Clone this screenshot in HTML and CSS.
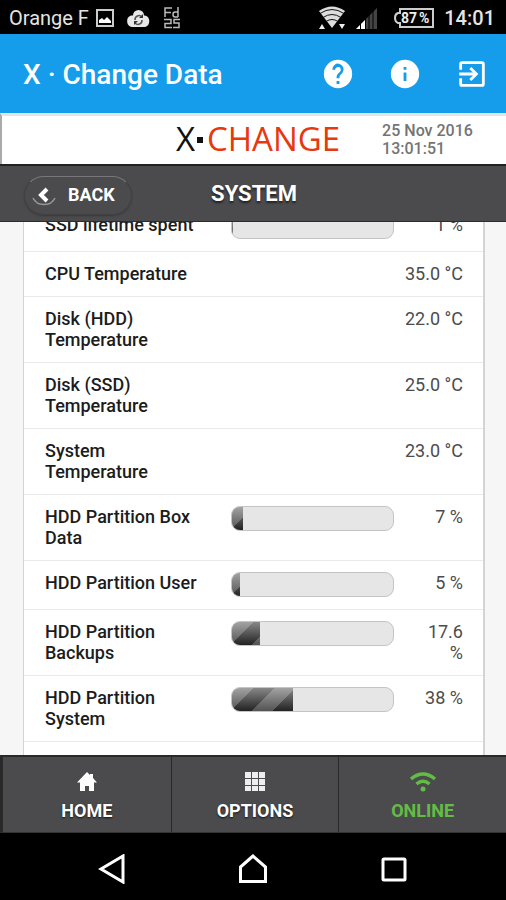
FILE: index.html
```html
<!DOCTYPE html>
<html lang="en">
<head>
<meta charset="utf-8">
<meta name="viewport" content="width=device-width, initial-scale=1">
<title>X · Change Data</title>
<link rel="stylesheet" href="styles.css">
</head>
<body>
<div class="status">
  <span class="carrier">Orange F</span>
  <svg class="picture" width="18" height="18" viewBox="0 0 18 18"><rect x="1" y="1" width="16" height="16" fill="none" stroke="#ccc" stroke-width="2"/><path d="M3 14v-3l3-2 2 2 3-3 4 4v2z" fill="#fff"/></svg>
  <svg class="cloud" width="25" height="20" viewBox="0 0 25 20"><path d="M6 19a6 6 0 0 1-1-11.500h2a5.500 5.500 0 0 1 11 0h1a6 6 0 0 1 0 11.500z" fill="#e8e8e8"/><path d="M9 12a4 4 0 0 1 7-3M16 12a4 4 0 0 1-7 3" fill="none" stroke="#555" stroke-width="1.500"/><path d="M17 6v4h-4zM8 17v-4h4z" fill="#333"/></svg>
  <svg class="app" width="18" height="22" viewBox="0 0 18 22"><path d="M9 1H2v9M2 5.500h6M15 0v10M15 5h-3q-2 0-2 2.500t2 2.500h3M1 12.500h7v4H2v4h7M17 12.500h-6v3.500h5v4.500h-6" fill="none" stroke="#bbb" stroke-width="1.500"/></svg>
  <svg class="wifi" width="28" height="24" viewBox="0 0 28 24"><path d="M1 5Q14-4 27 5L14 22z" fill="#ddd"/><path d="M2 7.500q12-8 24 0M5 11.500q9-6 18 0M8 15.500q6-4 12 0" fill="none" stroke="#111" stroke-width="1"/><path d="M1 23l3-5 3 5zM21 18h6l-3 5z" fill="#eee"/></svg>
  <svg class="signal" width="21" height="21" viewBox="0 0 21 21"><path d="M0 21L21 0v21z" fill="#444"/><path d="M0 21l9-9v9z" fill="#fff"/><path d="M4.500 15v6M9.500 10v11M13 7v14M17 3v18" stroke="#000"/></svg>
  <svg class="battery" width="40" height="20" viewBox="0 0 40 20"><path d="M6 1h33v18H6v-4H4q-3-1-3-5t3-5h2z" fill="none" stroke="#ccc" stroke-width="2"/><text x="7" y="15" class="charge">87</text><text x="25" y="15" class="charge">%</text></svg>
  <span class="clock">14:01</span>
</div>

<header class="appbar">
  <h1>X · Change Data</h1>
  <button type="button" aria-label="Help"><svg viewBox="0 0 24 24"><path d="M12 2a10 10 0 1 0 0 20 10 10 0 0 0 0-20zm1 17h-2v-2h2v2zm2.070-7.750-.9.920C13.450 12.900 13 13.500 13 15h-2v-.5c0-1.100.45-2.100 1.170-2.830l1.240-1.260A2 2 0 1 0 10 9H8a4 4 0 1 1 7.070 2.250z"/></svg></button>
  <button type="button" aria-label="Information"><svg viewBox="0 0 24 24"><path d="M12 2a10 10 0 1 0 0 20 10 10 0 0 0 0-20zm1 15h-2v-6h2v6zm0-8h-2V7h2v2z"/></svg></button>
  <button type="button" aria-label="Exit"><svg viewBox="0 0 24 24"><path d="M10.090 15.590 11.500 17l5-5-5-5-1.410 1.410L12.670 11H3v2h9.670l-2.580 2.590zM19 3H5a2 2 0 0 0-2 2v4h2V5h14v14H5v-4H3v4a2 2 0 0 0 2 2h14a2 2 0 0 0 2-2V5a2 2 0 0 0-2-2z"/></svg></button>
</header>

<section class="brand">
  <div class="logo">X<i class="dot"></i><span>CHANGE</span></div>
  <time datetime="2016-11-25T13:01:51">25 Nov 2016<br>13:01:51</time>
</section>

<div class="toolbar">
  <button type="button" class="back">
    <svg width="26" height="26" viewBox="0 0 26 26"><path d="M2 16a12 11 0 0 0 22 0" fill="none" stroke="#999" stroke-width="1.500"/><path d="M16 7l-6 6 6 6" fill="none" stroke="#fff" stroke-width="4"/></svg>
    BACK
  </button>
  <h2>SYSTEM</h2>
</div>

<main>
  <div class="panel">
  <table>
    <colgroup><col class="c-name"><col class="c-bar"><col class="c-value"></colgroup>
    <tbody>
    <tr><th scope="row">SSD lifetime spent</th><td><div class="meter"><div class="fill" style="width:1%"></div></div></td><td class="value">1 %</td></tr>
    <tr><th scope="row">CPU Temperature</th><td class="value" colspan="2">35.0 °C</td></tr>
    <tr><th scope="row">Disk (HDD) Temperature</th><td class="value" colspan="2">22.0 °C</td></tr>
    <tr><th scope="row">Disk (SSD) Temperature</th><td class="value" colspan="2">25.0 °C</td></tr>
    <tr><th scope="row">System Temperature</th><td class="value" colspan="2">23.0 °C</td></tr>
    <tr><th scope="row">HDD Partition Box Data</th><td><div class="meter"><div class="fill" style="width:7%"></div></div></td><td class="value">7 %</td></tr>
    <tr><th scope="row">HDD Partition User</th><td><div class="meter"><div class="fill" style="width:5%"></div></div></td><td class="value">5 %</td></tr>
    <tr><th scope="row">HDD Partition Backups</th><td><div class="meter"><div class="fill" style="width:17.6%"></div></div></td><td class="value">17.6 %</td></tr>
    <tr><th scope="row">HDD Partition System</th><td><div class="meter"><div class="fill" style="width:38%"></div></div></td><td class="value">38 %</td></tr>
    </tbody>
  </table>
  </div>
</main>

<nav class="tabs">
  <a href="#home"><svg width="22" height="22" viewBox="0 0 22 22"><path d="M11 1l3 3V3h3v4l4 4.500h-3V20h-5v-5H9v5H4v-8.500H1z" fill="#fff"/></svg>HOME</a>
  <a href="#options"><svg width="22" height="22" viewBox="0 0 22 22"><path d="M1 1h6v6H1zM8 1h6v6H8zM15 1h6v6h-6zM1 8h6v6H1zM8 8h6v6H8zM15 8h6v6h-6zM1 15h6v5H1zM8 15h6v5H8zM15 15h6v5h-6z" fill="#eee"/></svg>OPTIONS</a>
  <a href="#online" class="online"><svg width="28" height="22" viewBox="0 0 28 22"><path d="M2 8Q14-2 26 8M7.500 13Q14 7.500 20.500 13" fill="none" stroke="#63bd45" stroke-width="3.500"/><circle cx="14" cy="18" r="2.500" fill="#63bd45"/></svg>ONLINE</a>
</nav>

<div class="sysnav">
  <button type="button" aria-label="Back"><svg viewBox="0 0 28 30"><path d="M25 2v26L3 15z"/></svg></button>
  <button type="button" aria-label="Home"><svg viewBox="0 0 28 30"><path d="M14 2L1.500 13v14.500h25V13z"/></svg></button>
  <button type="button" aria-label="Recent apps"><svg viewBox="0 0 28 30"><rect x="3" y="5" width="22" height="21" rx="1"/></svg></button>
</div>
</body>
</html>
```

FILE: styles.css
```css
* { box-sizing: border-box; }

body {
  margin: 0;
  height: 100vh;
  display: flex;
  flex-direction: column;
  font-family: Roboto, "Liberation Sans", sans-serif;
  background: #f6f6f6;
  color: #1c1c1c;
}

button {
  font: inherit;
  color: inherit;
  border: 0;
  padding: 0;
  background: none;
}

.status {
  flex: none;
  height: 34px;
  display: flex;
  align-items: center;
  padding: 2px 11px 0 9px;
  background: #000;
  color: #e4e4e4;
  font-size: 20px;
}
.carrier { margin-right: 7px; }
.picture { margin-right: 12px; }
.cloud { margin-right: 12px; }
.wifi { margin-left: auto; }
.signal { margin: 0 17px 0 10px; }
.charge { font-size: 14px; font-weight: 700; fill: #eee; }
.clock { margin-left: 10px; font-weight: 500; }

.appbar {
  flex: none;
  height: 79px;
  display: flex;
  align-items: center;
  gap: 33px;
  padding: 0 17px 0 23px;
  background: #159ceb;
  color: #fff;
}
.appbar h1 {
  margin: 0 auto 0 0;
  font-size: 28px;
  line-height: 34px;
  font-weight: 500;
  padding-top: 2px;
}
.appbar svg {
  display: block;
  width: 34px;
  height: 34px;
  fill: #fff;
}

.brand {
  flex: none;
  height: 51px;
  display: grid;
  grid-template-columns: 1fr auto 1fr;
  align-items: center;
  border-top: 3px solid #e6e3e3;
  border-left: 2px solid #aaa;
  background: #fff;
}
.logo {
  grid-column: 2;
  display: flex;
  align-items: center;
  padding: 0 0 2px 8px;
  font-family: "Open Sans", sans-serif;
  font-size: 33px;
  line-height: 40px;
  color: #111;
}
.logo span { color: #e8380d; }
.dot {
  width: 6px;
  height: 6px;
  margin: 2px 4px 0 2px;
  background: #111;
}
.brand time {
  padding-left: 42px;
  font-size: 16px;
  line-height: 18px;
  font-weight: 500;
  color: #747474;
}

.toolbar {
  flex: none;
  height: 58px;
  display: grid;
  grid-template-columns: 1fr auto 1fr;
  align-items: center;
  padding: 0 22px 0 24px;
  border-top: 2px solid #222;
  border-bottom: 1px solid #2c2c2c;
  background: #4b4b4d;
  color: #fff;
  text-shadow: 0 2px 2px #222;
}
.toolbar h2 {
  margin: 0;
  font-size: 22px;
  line-height: 26px;
  font-weight: 700;
}
.back {
  justify-self: start;
  display: flex;
  align-items: center;
  gap: 11px;
  height: 39px;
  margin-top: 4px;
  padding: 0 16px 2px 6px;
  border: 1px solid #414143;
  border-top-color: #77777a;
  border-radius: 20px;
  box-shadow: 0 1px 2px #3a3a3c;
  font-size: 18px;
  font-weight: 700;
}

main {
  flex: 1;
  min-height: 0;
  display: flex;
  overflow: hidden;
  padding: 0 21px 0 23px;
}
.panel {
  flex: 1;
  border: 0 solid #d4d4d4;
  border-width: 0 2px 0 1px;
  background: #fff;
}
table {
  width: 100%;
  margin-top: -19px;
  table-layout: fixed;
  border-collapse: separate;
  border-spacing: 0;
  font-size: 18px;
  line-height: 21px;
}
.c-name { width: 45%; }
.c-bar { width: 36%; }
th,
td {
  padding: 11px 0 12px;
  border-bottom: 1px solid #e9e9e9;
  vertical-align: top;
  text-align: left;
}
th {
  padding-left: 21px;
  padding-right: 22px;
  font-weight: 500;
}
.value {
  padding-right: 20px;
  padding-left: 24px;
  font-weight: 400;
  color: #4c4c4c;
  text-align: right;
}
.meter {
  height: 25px;
  margin-right: 2px;
  overflow: hidden;
  border: 1px solid #c4c4c4;
  border-radius: 9px;
  background: #e6e6e6;
}
.fill {
  height: 100%;
  background:
    repeating-linear-gradient(135deg, #ffffff38 0 15px, #fff0 15px 30px),
    linear-gradient(#888, #222);
}

.tabs {
  flex: none;
  height: 78px;
  display: grid;
  grid-template-columns: repeat(3, 1fr);
  border-top: 2px solid #29292a;
  border-bottom: 1px solid #333;
  border-left: 3px solid #29292a;
  background: #4b4b4d;
}
.tabs a {
  display: flex;
  flex-direction: column;
  align-items: center;
  gap: 6px;
  padding-top: 14px;
  border-left: 1px solid #29292a;
  color: #fff;
  font-size: 18px;
  line-height: 24px;
  font-weight: 700;
  text-decoration: none;
  text-shadow: 0 1px 2px #111;
}
.tabs a:first-child { border-left: 0; }
.tabs .online { color: #63bd45; text-shadow: none; }

.sysnav {
  flex: none;
  height: 67px;
  display: flex;
  justify-content: center;
  align-items: center;
  gap: 113px;
  background: #000;
}
.sysnav svg {
  display: block;
  width: 28px;
  height: 30px;
  margin-top: 4px;
  fill: none;
  stroke: #fff;
  stroke-width: 3;
}
```
